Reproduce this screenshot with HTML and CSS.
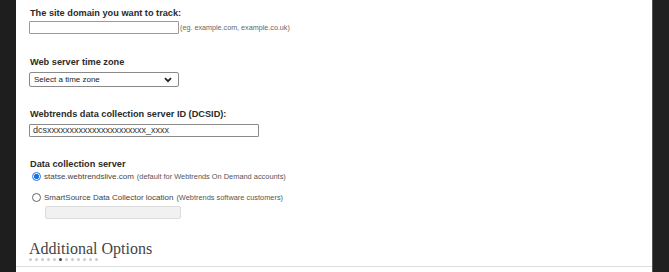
FILE: index.html
```html
<!DOCTYPE html>
<html>
<head>
<meta charset="utf-8">
<link rel="stylesheet" href="styles.css">
</head>
<body>
<div class="frame">
  <div class="side"></div>
  <div class="main">
    <div class="content">
      <div class="field f1">
        <div class="label">The site domain you want to track:</div>
        <div class="row">
          <input class="txt w150" type="text">
          <span class="hint">(eg. example.com, example.co.uk)</span>
        </div>
      </div>
      <div class="field f2">
        <div class="label">Web server time zone</div>
        <div class="select">
          <span>Select a time zone</span>
          <svg class="chev" width="8" height="6" viewBox="0 0 8 6"><path d="M1 1.2 L4 4.2 L7 1.2" fill="none" stroke="#222" stroke-width="1.7"/></svg>
        </div>
      </div>
      <div class="field f3">
        <div class="label">Webtrends data collection server ID (DCSID):</div>
        <div class="txtbox w230">dcsxxxxxxxxxxxxxxxxxxxxxx_xxxx</div>
      </div>
      <div class="field f4">
        <div class="label">Data collection server</div>
        <div class="radio r1">
          <span class="dot on"></span>
          <span class="rtext">statse.webtrendslive.com</span>
          <span class="note">(default for Webtrends On Demand accounts)</span>
        </div>
        <div class="radio r2">
          <span class="dot"></span>
          <span class="rtext">SmartSource Data Collector location</span>
          <span class="note">(Webtrends software customers)</span>
        </div>
        <div class="disabled"></div>
      </div>
      <h2 class="heading">Additional Options</h2>
      <div class="dots">
        <span></span><span></span><span></span><span></span><span></span><span class="cur"></span><span></span><span></span><span></span><span></span><span></span><span></span>
      </div>
    </div>
    <div class="rule"></div>
  </div>
  <div class="side right"></div>
</div>
</body>
</html>
```
FILE: styles.css
```css
html, body {
  margin: 0;
  padding: 0;
  background: #1f1f1f;
}
.frame {
  display: flex;
  width: 669px;
  height: 272px;
  overflow: hidden;
  font-family: "Liberation Sans", Arial, sans-serif;
  color: #333;
}
.side {
  width: 16px;
  background: #1e1e1e;
}
.side.right {
  width: 16px;
  border-left: 1px solid #555;
  background: #202020;
}
.main {
  flex: 1;
  background: #fff;
  display: flex;
  flex-direction: column;
}
.content {
  padding-left: 13px;
  height: 266px;
}
.rule {
  height: 1px;
  background: #ddd;
}
.label {
  font-size: 9.2px;
  font-weight: bold;
  line-height: 12px;
  color: #2b2b2b;
  padding-left: 1px;
}
.f1 { padding-top: 7px; }
.f1 .row { display: flex; align-items: center; margin-top: 2px; }
.txt {
  margin: 0;
  padding: 0;
  box-sizing: border-box;
  height: 13px;
  border: 1px solid #9a9a9a;
  border-radius: 1px;
  background: #fff;
}
.w150 { width: 150px; }
.hint {
  font-size: 7.2px;
  color: #666;
  margin-left: 1px;
}
.f2 { margin-top: 22px; }
.select {
  margin-top: 4px;
  box-sizing: border-box;
  width: 150px;
  height: 15px;
  border: 1px solid #8a8a8a;
  border-radius: 2px;
  display: flex;
  align-items: center;
  justify-content: space-between;
  padding: 0 6px 0 4px;
  font-size: 8px;
  color: #222;
}
.f3 { margin-top: 21px; }
.txtbox {
  margin-top: 4px;
  box-sizing: border-box;
  height: 13px;
  border: 1px solid #8a8a8a;
  border-radius: 1px;
  font-size: 9px;
  line-height: 11px;
  padding-left: 3px;
  color: #333;
}
.w230 { width: 230px; }
.f4 { margin-top: 21px; }
.radio {
  display: flex;
  align-items: center;
  height: 12px;
  padding-left: 3px;
}
.r1 { margin-top: 0px; }
.r2 { margin-top: 9px; }
.dot {
  box-sizing: border-box;
  width: 9px;
  height: 9px;
  border-radius: 50%;
  border: 1px solid #666;
  margin-right: 3px;
}
.dot.on {
  border: 1px solid #1a73e8;
  background: radial-gradient(circle, #1a73e8 0 2.4px, #fff 2.9px);
}
.rtext {
  font-size: 8px;
  color: #444;
}
.note {
  font-size: 7.4px;
  color: #555;
  margin-left: 3px;
}
.disabled {
  margin-top: 3px;
  margin-left: 16px;
  box-sizing: border-box;
  width: 136px;
  height: 13px;
  background: #f1f1f1;
  border: 1px solid #dcdcdc;
  border-radius: 2px;
}
.heading {
  margin: 21px 0 0 0;
  font-family: "Liberation Serif", "Times New Roman", serif;
  font-weight: normal;
  font-size: 16px;
  line-height: 17px;
  color: #444;
}
.dots {
  display: flex;
  gap: 3px;
  margin-top: 1px;
}
.dots span {
  width: 3px;
  height: 3px;
  border-radius: 50%;
  background: #ccc;
}
.dots span.cur {
  background: #444;
}
```
